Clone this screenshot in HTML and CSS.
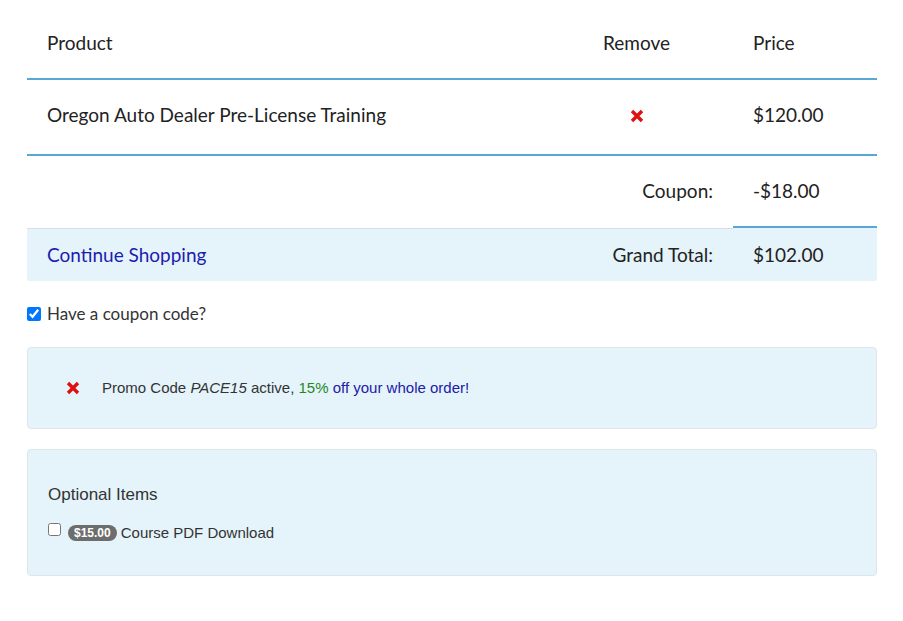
FILE: index.html
```html
<!DOCTYPE html>
<html lang="en">
<head>
<meta charset="UTF-8">
<title>Cart</title>
<meta name="viewport" content="width=device-width, initial-scale=1">
<link rel="stylesheet" href="styles.css">
</head>
<body>
<div class="page">
  <div class="cart">
    <div class="row head">
      <div class="cell">Product</div>
      <div class="cell center">Remove</div>
      <div class="cell">Price</div>
    </div>
    <div class="row item">
      <div class="cell">Oregon Auto Dealer Pre-License Training</div>
      <div class="cell center">
        <svg class="x-icon" viewBox="0 0 16 16"><path d="M3 3L13 13M13 3L3 13" stroke="#e01010" stroke-width="3.4" stroke-linecap="butt"/></svg>
      </div>
      <div class="cell">$120.00</div>
    </div>
    <div class="row coupon">
      <div class="cell label">Coupon:</div>
      <div class="cell price">-$18.00</div>
    </div>
    <div class="row total">
      <div class="cell"><a href="#" class="link">Continue Shopping</a></div>
      <div class="cell label">Grand Total:</div>
      <div class="cell price">$102.00</div>
    </div>
  </div>

  <label class="coupon-check">
    <input type="checkbox" checked>
    <span>Have a coupon code?</span>
  </label>

  <div class="panel promo">
    <svg class="x-icon" viewBox="0 0 16 16"><path d="M3 3L13 13M13 3L3 13" stroke="#e01010" stroke-width="3.4" stroke-linecap="butt"/></svg>
    <span>Promo Code <em>PACE15</em> active, <span class="green">15%</span> <span class="navy">off your whole order!</span></span>
  </div>

  <div class="panel optional">
    <div class="opt-title">Optional Items</div>
    <label class="opt-item">
      <input type="checkbox">
      <span class="badge">$15.00</span>
      <span>Course PDF Download</span>
    </label>
  </div>
</div>
</body>
</html>
```

FILE: styles.css
```css
body {
  margin: 0;
  background: #fff;
  color: #222;
  font-family: Lato, "Open Sans", sans-serif;
}

.page {
  width: 850px;
  margin-left: 27px;
}

.row {
  display: grid;
  grid-template-columns: 1fr 193px 144px;
  font-size: 19px;
  line-height: 24px;
}
.cell {
  padding: 0 20px;
}
.center {
  text-align: center;
}

.head {
  padding: 31px 0 23px;
  border-bottom: 2px solid #57a8d4;
}
.item {
  padding: 23px 0 27px;
  border-bottom: 2px solid #57a8d4;
}
.item .x-icon {
  width: 16px;
  height: 16px;
  vertical-align: -2px;
}

.coupon .label,
.total .label {
  text-align: right;
}
.coupon .label {
  grid-column: 1 / 3;
}
.coupon .cell {
  padding-top: 23px;
  padding-bottom: 23px;
}
.coupon .price {
  border-bottom: 2px solid #57a8d4;
}

.total {
  background: #e5f3fa;
  border-radius: 0 0 3px 3px;
}
.total .cell {
  padding-top: 14px;
  padding-bottom: 14px;
  border-top: 1px solid #d7dfe3;
}
.total .price {
  border-top-color: transparent;
}
.link {
  color: #1c1cb0;
  text-decoration: none;
}

.coupon-check {
  display: flex;
  align-items: center;
  gap: 6px;
  margin-top: 23px;
  font-size: 17px;
  line-height: 20px;
  color: #333;
}
.coupon-check input {
  margin: 0;
  width: 14px;
  height: 14px;
}

.panel {
  background: #e5f3fb;
  border: 1px solid #dde5ea;
  border-radius: 4px;
  font-family: "Liberation Sans", Arial, sans-serif;
}
.promo {
  display: flex;
  align-items: center;
  gap: 21px;
  margin-top: 23px;
  padding: 30px 37px;
  font-size: 15px;
  line-height: 20px;
  color: #333;
}
.promo .x-icon {
  width: 16px;
  height: 16px;
}
.green {
  color: #1f8a22;
}
.navy {
  color: #2020a8;
}

.optional {
  margin-top: 20px;
  padding: 35px 20px 34px;
}
.opt-title {
  font-size: 17px;
  line-height: 20px;
  color: #333;
  margin-bottom: 19px;
}
.opt-item {
  display: flex;
  align-items: center;
  gap: 4px;
  font-size: 15px;
  color: #333;
}
.opt-item input {
  margin: -6px 3px 0 0;
  width: 13px;
  height: 13px;
}
.badge {
  background: #6d6d6d;
  color: #fff;
  font-weight: bold;
  font-size: 12px;
  line-height: 16px;
  padding: 0 6px;
  border-radius: 9px;
}
```
